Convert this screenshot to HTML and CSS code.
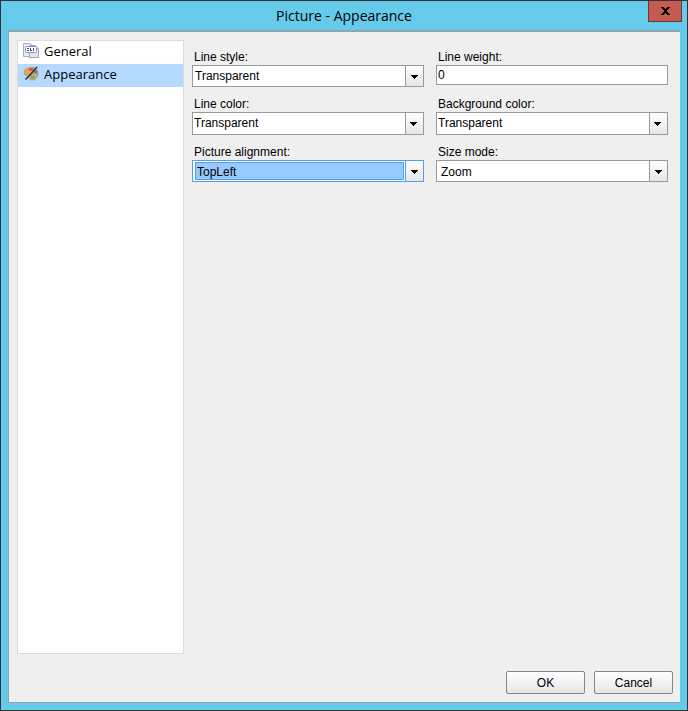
FILE: index.html
```html
<!DOCTYPE html>
<html lang="en">
<head>
<meta charset="utf-8">
<title>Picture - Appearance</title>
<link rel="stylesheet" href="styles.css">
</head>
<body>
<svg class="defs" aria-hidden="true">
  <symbol id="arrow" viewBox="0 0 7 4"><path d="M0 0h7v1H6v1H5v1H4v1H3V3H2V2H1V1H0z"/></symbol>
</svg>
<div class="window">
  <header class="titlebar">
    <h1>Picture - Appearance</h1>
    <button class="close" type="button" aria-label="Close">
      <svg width="9" height="8" viewBox="0 0 9 8" shape-rendering="crispEdges"><path d="M0 0h3v1h1v1h1V1h1V0h3v1H8v1H7v1H6v2h1v1h1v1h1v1H6V7H5V6H4v1H3v1H0V7h1V6h1V5h1V3H2V2H1V1H0z"/></svg>
    </button>
  </header>
  <form class="dialog">
    <div class="content">
      <nav class="pages">
        <a href="#general">
          <svg width="16" height="16" viewBox="0 0 16 16">
            <path d="M.5.500h7l2 2v11h-9z" fill="#ececec" stroke="#b0b0b0"/>
            <path d="M6.500 2.500h6l3 3v9h-9z" fill="#e4e4e4" stroke="#a8a8a8"/>
            <path d="M12.500 2.500v3h3" fill="#fff" stroke="#b4b4b4"/>
            <rect x="2.500" y="3.500" width="11" height="6" rx="1" fill="#fff" stroke="#6f96ea"/>
            <path d="M4 5h2v1h-1v1h1v1H4V7h1V6H4zM7 5h1v2h1v1H7zM10 5h1v3h-1z" fill="#454b5c"/>
          </svg>
          General
        </a>
        <a href="#appearance" class="current" aria-current="page">
          <svg width="16" height="16" viewBox="0 0 16 16">
            <path d="M1 6C1 3 5 2 7 1.500 11 .5 15 3 15 7c0 5-3 7-6 7-3 0-3-2-2-3 1-2-1-2-2-1.500C3 10 1 9 1 6z" fill="#d3a77c" stroke="#b58a5d" stroke-width=".7"/>
            <ellipse cx="4" cy="5.500" rx="1.800" ry="1.400" fill="#f7a531"/>
            <ellipse cx="8" cy="3.500" rx="2.200" ry="1.500" fill="#ea4a35"/>
            <ellipse cx="12.500" cy="6" rx="1.700" ry="1.800" fill="#3f82dc"/>
            <ellipse cx="10" cy="11" rx="2.200" ry="1.600" fill="#5cc035"/>
            <path d="M2.500 13.500l5-5" stroke="#30302f" stroke-width="1.600"/>
            <path d="M7 9l7-8" stroke="#222b3a" stroke-width="1.300"/>
          </svg>
          Appearance
        </a>
      </nav>
      <div class="fields">
        <div class="field">
          <label for="line-style">Line style:</label>
          <div class="combo">
            <select id="line-style"><option>Transparent</option></select>
            <span class="drop"><svg width="7" height="4" shape-rendering="crispEdges"><use href="#arrow"/></svg></span>
          </div>
        </div>
        <div class="field">
          <label for="line-weight">Line weight:</label>
          <input id="line-weight" type="text" value="0">
        </div>
        <div class="field">
          <label for="line-color">Line color:</label>
          <div class="combo color">
            <select id="line-color"><option>Transparent</option></select>
            <span class="drop"><svg width="7" height="4" shape-rendering="crispEdges"><use href="#arrow"/></svg></span>
          </div>
        </div>
        <div class="field">
          <label for="background-color">Background color:</label>
          <div class="combo color">
            <select id="background-color"><option>Transparent</option></select>
            <span class="drop"><svg width="7" height="4" shape-rendering="crispEdges"><use href="#arrow"/></svg></span>
          </div>
        </div>
        <div class="field">
          <label for="alignment">Picture alignment:</label>
          <div class="combo list active">
            <select id="alignment"><option>TopLeft</option></select>
            <span class="drop"><svg width="7" height="4" shape-rendering="crispEdges"><use href="#arrow"/></svg></span>
          </div>
        </div>
        <div class="field">
          <label for="size-mode">Size mode:</label>
          <div class="combo list">
            <select id="size-mode"><option>Zoom</option></select>
            <span class="drop"><svg width="7" height="4" shape-rendering="crispEdges"><use href="#arrow"/></svg></span>
          </div>
        </div>
      </div>
    </div>
    <footer class="actions">
      <button type="button">OK</button>
      <button type="button">Cancel</button>
    </footer>
  </form>
</div>
</body>
</html>
```

FILE: styles.css
```css
* { box-sizing: border-box; }

body {
  margin: 0;
  font: 12px/16px "Liberation Sans", Arial, sans-serif;
  color: #000;
}

.defs { display: none; }

.window {
  display: flex;
  flex-direction: column;
  min-height: 100vh;
  padding: 0 7px 7px;
  border: 1px solid #36303a;
  background: #66caea;
}

.titlebar {
  display: grid;
  grid-template-columns: 1fr auto 1fr;
  align-items: start;
  height: 29px;
}

.titlebar h1 {
  grid-column: 2;
  margin: 0;
  font: 14px/30px "Open Sans", "Noto Sans", sans-serif;
}

.close {
  justify-self: end;
  display: grid;
  place-items: center;
  width: 34px;
  height: 21px;
  margin-right: -2px;
  padding: 0;
  border: 1px solid #63393c;
  border-top: 0;
  background: #c35b51;
}

.dialog {
  flex: 1;
  display: flex;
  flex-direction: column;
  padding: 8px 7px 8px 8px;
  border: 1px solid #8ea5b1;
  border-top-width: 2px;
  border-right: 0;
  background: #efefef;
}

.content {
  flex: 1;
  display: flex;
  gap: 8px;
}

.pages {
  width: 167px;
  border: 1px solid #dcdcdc;
  background: #fff;
}

.pages a {
  display: flex;
  align-items: center;
  gap: 5px;
  height: 23px;
  padding: 0 5px 3px;
  color: #000;
  font: 13px/20px "Open Sans", sans-serif;
  text-decoration: none;
}

.pages .current { background: #b5d9ff; }

.fields {
  flex: 1;
  display: grid;
  grid-template-columns: 1fr 1fr;
  align-content: start;
  gap: 9px 12px;
  padding: 9px 5px 0 0;
}

.field label {
  display: block;
  padding-left: 2px;
}

.field input {
  display: block;
  width: 100%;
  height: 20px;
  padding: 0 1px;
  border: 1px solid #999;
  background: #fff;
  font: inherit;
}

.combo {
  display: flex;
  height: 22px;
  border: 1px solid #999;
  background: #fff;
}

.combo select {
  flex: 1;
  min-width: 0;
  padding: 0 2px;
  border: 0;
  background: transparent;
  color: #000;
  font: inherit;
  appearance: none;
}

.color { height: 23px; }
.color select { padding: 0 1px 1px; }
.list select { padding: 1px 0 0 4px; }

.drop {
  display: grid;
  place-items: center;
  width: 18px;
  padding-top: 1px;
  border-left: 1px solid #999;
  background: linear-gradient(#fff, #e6e6e6);
}

.color .drop { padding-right: 2px; }

.active { border-color: #4f9ff0; }

.active select {
  margin: 1px 1px 1px 2px;
  padding-left: 1px;
  border: 1px solid #4f9ff0;
  background: #99caff;
}

.active .drop { border-color: #4f9ff0; }

.actions {
  display: flex;
  justify-content: flex-end;
  gap: 9px;
  padding-top: 17px;
}

.actions button {
  width: 79px;
  height: 23px;
  padding: 0;
  border: 1px solid #858585;
  border-radius: 2px;
  background: linear-gradient(#fff, #e6e6e6);
  color: #000;
  font: inherit;
}
```
